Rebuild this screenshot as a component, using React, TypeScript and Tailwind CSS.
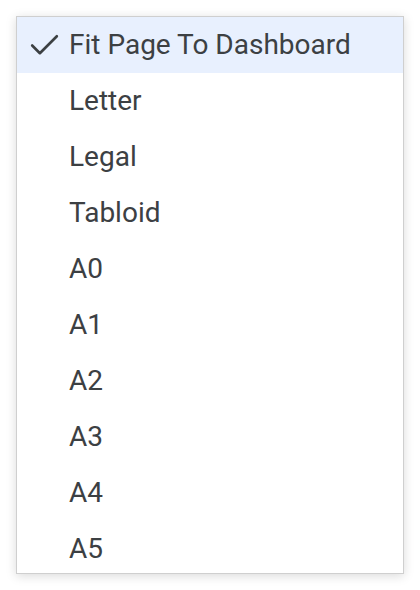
import { Check } from 'lucide-react';

const sizes = ['Fit Page To Dashboard', 'Letter', 'Legal', 'Tabloid', 'A0', 'A1', 'A2', 'A3', 'A4', 'A5'];

export default function App() {
  return (
    <div className="min-h-[590px] bg-white p-4 font-['Roboto',sans-serif]">
      <div className="w-[388px] h-[558px] overflow-hidden border border-[#cfcfcf] bg-white shadow-[0_2px_10px_rgba(0,0,0,0.15)]">
        {sizes.map((s, i) => (
          <div
            key={s}
            className={`flex items-center h-[56px] text-[28px] text-[#3c4043] ${i === 0 ? 'bg-[#e8f0fe]' : ''}`}
          >
            <span className="w-[52px] flex pl-[9px]">
              {i === 0 && <Check size={37} strokeWidth={1.7} className="text-[#3c4043]" />}
            </span>
            <span>{s}</span>
          </div>
        ))}
      </div>
    </div>
  );
}
